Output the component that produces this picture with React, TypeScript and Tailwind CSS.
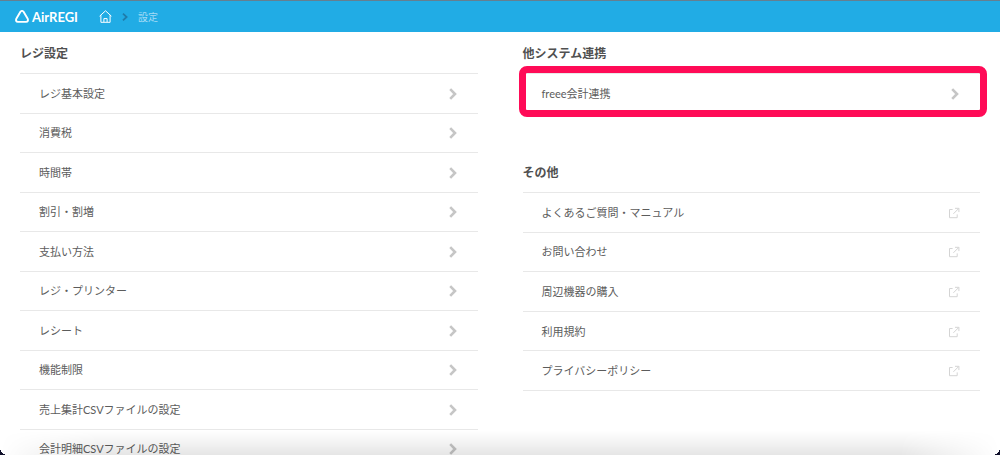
import React from "react";

type LinkItem = {
  label: string;
  external?: boolean;
};

const registerItems: LinkItem[] = [
  { label: "レジ基本設定" },
  { label: "消費税" },
  { label: "時間帯" },
  { label: "割引・割増" },
  { label: "支払い方法" },
  { label: "レジ・プリンター" },
  { label: "レシート" },
  { label: "機能制限" },
  { label: "売上集計CSVファイルの設定" },
  { label: "会計明細CSVファイルの設定" },
];

const otherItems: LinkItem[] = [
  { label: "よくあるご質問・マニュアル", external: true },
  { label: "お問い合わせ", external: true },
  { label: "周辺機器の購入", external: true },
  { label: "利用規約", external: true },
  { label: "プライバシーポリシー", external: true },
];

const Chevron = () => (
  <svg className="mr-[21px] h-3 w-2" viewBox="0 0 8 12" fill="none" stroke="#c6c6c6" strokeWidth="2.6" aria-hidden="true">
    <path d="M1.2 1.2L6 6l-4.8 4.8" />
  </svg>
);

const ExternalIcon = () => (
  <svg className="mr-5 h-3 w-3" viewBox="0 0 12 12" fill="none" stroke="#d4d4d4" aria-hidden="true">
    <path d="M4.6 2.5H1.5v8.2h7.7V7.4M5.4 6.8l5.2-5.2M7 1.3h3.9v3.8" />
  </svg>
);

const Row: React.FC<{ item: LinkItem; highlighted?: boolean }> = ({ item, highlighted }) => (
  <li className="relative flex flex-1 border-t border-[#e8e8e8] last:border-b">
    <a href="#" className="flex flex-1 items-center justify-between pt-px pl-[19px] text-[11px] leading-4">
      <span>{item.label}</span>
      {item.external ? <ExternalIcon /> : <Chevron />}
    </a>
    {highlighted && (
      <div className="pointer-events-none absolute -top-2 -right-[7px] -bottom-[5px] -left-1 rounded-lg border-[7px] border-[#ff0b57]" />
    )}
  </li>
);

const Header = () => (
  <header className="flex h-8 shrink-0 items-center border-t border-[#657f90] bg-[#21ace5] pl-[15px] text-white">
    <a href="#" className="flex items-center gap-[3px]" aria-label="AirREGI">
      <svg className="h-[13px] w-3.5" viewBox="0 0 14 13" fill="none" stroke="currentColor" strokeWidth="1.9" strokeLinejoin="round" aria-hidden="true">
        <path d="M5.3 1.9Q7 -.1 8.7 1.9L12.7 8.7Q13.7 11.6 11 11.9H3Q.3 11.6 1.3 8.7Z" />
      </svg>
      <span className="w-11 font-[Lato] text-[13px] leading-4 font-bold">AirREGI</span>
    </a>
    <nav className="ml-[23px] flex items-center" aria-label="breadcrumb">
      <a href="#" aria-label="ホーム">
        <svg className="h-[13px] w-[13px]" viewBox="0 0 13 13" fill="none" stroke="currentColor" strokeLinejoin="round" aria-hidden="true">
          <path d="M.6 6.2L6.5 .8l5.9 5.4M1.9 5.2v7.1h9.2V5.2M4.9 12V8.6h3.2V12" />
        </svg>
      </a>
      <svg className="mx-[10px] h-2 w-1.5" viewBox="0 0 6 8" fill="none" stroke="#1f7cab" strokeWidth="1.8" aria-hidden="true">
        <path d="M1 .7L4.6 4 1 7.3" />
      </svg>
      <span className="text-[10px] leading-4 text-[#a3dbf5]">設定</span>
    </nav>
  </header>
);

const Heading: React.FC<{ children: React.ReactNode }> = ({ children }) => (
  <h2 className="flex h-[41px] items-center pt-0.5 text-xs font-bold text-[#505050]">{children}</h2>
);

export default function App() {
  return (
    <div className="relative flex h-screen flex-col overflow-hidden bg-white font-[Lato,'Noto_Sans_CJK_JP',sans-serif] text-[#5c5c5c]">
      <Header />
      <main className="grid grid-cols-2 items-start gap-x-[45px] px-5">
        <section>
          <Heading>レジ設定</Heading>
          <ul className="flex h-[396px] flex-col">
            {registerItems.map((item) => (
              <Row key={item.label} item={item} />
            ))}
          </ul>
        </section>
        <div>
          <section>
            <Heading>他システム連携</Heading>
            <ul className="flex h-10 flex-col">
              <Row item={{ label: "freee会計連携" }} highlighted />
            </ul>
          </section>
          <section className="mt-[38px]">
            <Heading>その他</Heading>
            <ul className="flex h-[199px] flex-col">
              {otherItems.map((item) => (
                <Row key={item.label} item={item} />
              ))}
            </ul>
          </section>
        </div>
      </main>
      {/* shade at the bottom edge and the window's rounded corners */}
      <div className="pointer-events-none absolute inset-x-0 bottom-0 h-6 bg-linear-to-b from-transparent to-black/10 mask-x-from-90% mask-x-to-100%" />
      <div className="pointer-events-none absolute bottom-0 left-0 h-2 w-2 bg-[radial-gradient(circle_at_top_right,transparent_8px,#10102a_8px)]" />
      <div className="pointer-events-none absolute right-0 bottom-0 h-2 w-2 bg-[radial-gradient(circle_at_top_left,transparent_8px,#10102a_8px)]" />
    </div>
  );
}
